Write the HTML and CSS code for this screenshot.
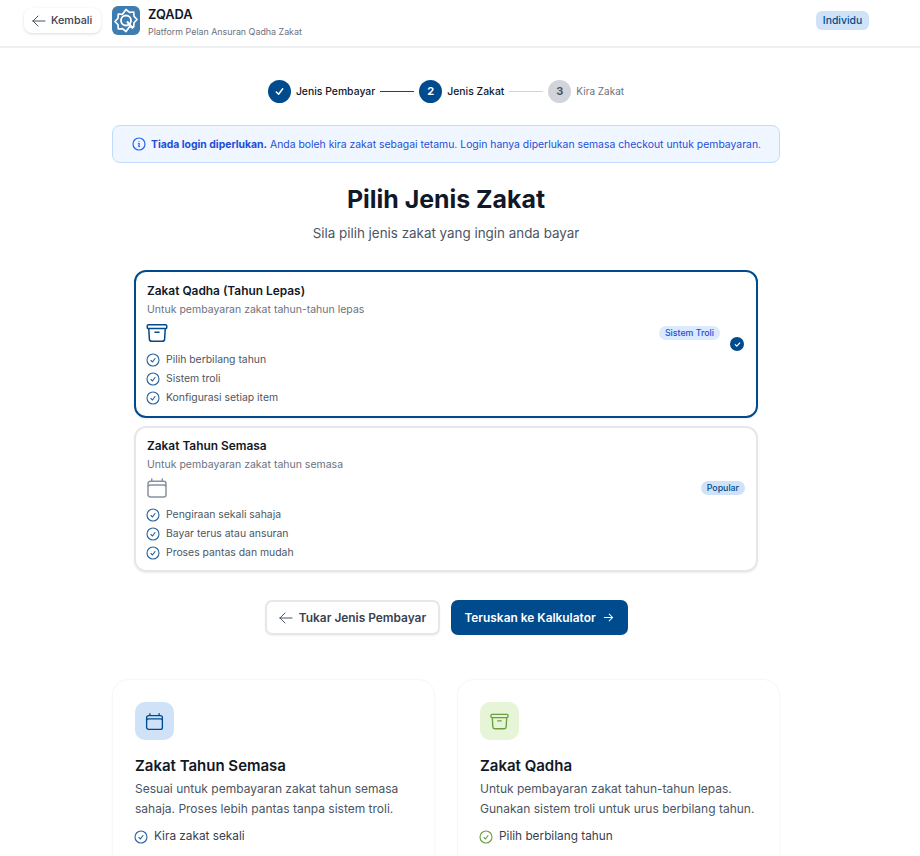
FILE: index.html
```html
<!DOCTYPE html>
<html>
<head>
    <title>ZQADA - Pilih Jenis Zakat</title>
    <link rel="stylesheet" href="styles.css">
</head>
<body>
    <svg class="sprite" width="0" height="0">
        <symbol id="i-check" viewBox="0 0 24 24"><path d="M9 12.750 11.250 15 15 9.750M21 12a9 9 0 1 1-18 0 9 9 0 0 1 18 0Z" fill="none" stroke="currentColor" stroke-width="1.700" stroke-linecap="round" stroke-linejoin="round"/></symbol>
        <symbol id="i-box" viewBox="0 0 24 24"><path d="m20.250 7.500-.625 10.632a2.250 2.250 0 0 1-2.247 2.118H6.622a2.250 2.250 0 0 1-2.247-2.118L3.750 7.500M10 11.250h4M3.375 7.500h17.250c.621 0 1.125-.504 1.125-1.125v-1.500c0-.621-.504-1.125-1.125-1.125H3.375c-.621 0-1.125.504-1.125 1.125v1.500c0 .621.504 1.125 1.125 1.125Z" fill="none" stroke="currentColor" stroke-width="1.500" stroke-linecap="round" stroke-linejoin="round"/></symbol>
        <symbol id="i-cal" viewBox="0 0 24 24"><path d="M6.750 3v2.250M17.250 3v2.250M3 18.750V7.500a2.250 2.250 0 0 1 2.250-2.250h13.500A2.250 2.250 0 0 1 21 7.500v11.250m-18 0A2.250 2.250 0 0 0 5.250 21h13.500A2.250 2.250 0 0 0 21 18.750m-18 0v-7.500A2.250 2.250 0 0 1 5.250 9h13.500A2.250 2.250 0 0 1 21 11.250v7.500" fill="none" stroke="currentColor" stroke-width="1.500" stroke-linecap="round" stroke-linejoin="round"/></symbol>
        <symbol id="i-left" viewBox="0 0 24 24"><path d="M10.500 19.500 3 12m0 0 7.500-7.500M3 12h18" fill="none" stroke="currentColor" stroke-width="1.500" stroke-linecap="round" stroke-linejoin="round"/></symbol>
        <symbol id="i-right" viewBox="0 0 24 24"><path d="M13.500 4.500 21 12m0 0-7.500 7.500M21 12H3" fill="none" stroke="currentColor" stroke-width="2.200" stroke-linecap="round" stroke-linejoin="round"/></symbol>
    </svg>

    <header class="topbar">
        <div class="topbar-left">
            <a class="back-btn"><svg class="back-icon"><use href="#i-left"/></svg>Kembali</a>
            <svg class="logo" viewBox="0 0 28 29">
                <rect width="28" height="29" rx="6" fill="#3f7cb0"/>
                <path d="M14 3.500l3.500 2.800 4.200-.3.300 4.200 3 3.300-3 3.300-.3 4.200-4.200-.3L14 25.500l-3.500-2.800-4.200.3-.3-4.200-3-3.300 3-3.300.3-4.200 4.200.3z" fill="none" stroke="#fff" stroke-width="1.700" stroke-linejoin="round"/>
                <circle cx="14" cy="14.500" r="5" fill="none" stroke="#fff" stroke-width="1.800"/>
                <path d="M15 15.500l6 7" stroke="#fff" stroke-width="2"/>
            </svg>
            <div class="brand">
                <div class="brand-name">ZQADA</div>
                <div class="brand-sub">Platform Pelan Ansuran Qadha Zakat</div>
            </div>
        </div>
        <span class="role-badge">Individu</span>
    </header>

    <main class="page">
        <div class="stepper">
            <span class="step-dot"><svg viewBox="0 0 24 24"><path d="M5 13l5 5L19 6" fill="none" stroke="#fff" stroke-width="3.200" stroke-linecap="round" stroke-linejoin="round"/></svg></span>
            <span class="step-label">Jenis Pembayar</span>
            <span class="step-line step-line-done"></span>
            <span class="step-dot">2</span>
            <span class="step-label">Jenis Zakat</span>
            <span class="step-line"></span>
            <span class="step-dot step-dot-off">3</span>
            <span class="step-label step-label-off">Kira Zakat</span>
        </div>

        <div class="notice">
            <svg class="notice-icon" viewBox="0 0 24 24"><path d="m11.250 11.250.041-.020a.750.750 0 0 1 1.063.852l-.708 2.836a.750.750 0 0 0 1.063.853l.041-.021M21 12a9 9 0 1 1-18 0 9 9 0 0 1 18 0Zm-9-3.750h.008v.008H12V8.250Z" fill="none" stroke="currentColor" stroke-width="1.800" stroke-linecap="round" stroke-linejoin="round"/></svg>
            <p><strong>Tiada login diperlukan.</strong> Anda boleh kira zakat sebagai tetamu. Login hanya diperlukan semasa checkout untuk pembayaran.</p>
        </div>

        <h1 class="page-title">Pilih Jenis Zakat</h1>
        <p class="page-sub">Sila pilih jenis zakat yang ingin anda bayar</p>

        <div class="options">
            <div class="option option-selected">
                <h3>Zakat Qadha (Tahun Lepas)</h3>
                <p class="option-desc">Untuk pembayaran zakat tahun-tahun lepas</p>
                <div class="option-row">
                    <svg class="option-icon"><use href="#i-box"/></svg>
                    <span class="pill pill-blue">Sistem Troli</span>
                    <span class="tick"><svg viewBox="0 0 24 24"><path d="M6 12.500l4 4 8-8.500" fill="none" stroke="#fff" stroke-width="3" stroke-linecap="round" stroke-linejoin="round"/></svg></span>
                </div>
                <ul class="option-list">
                    <li><svg><use href="#i-check"/></svg>Pilih berbilang tahun</li>
                    <li><svg><use href="#i-check"/></svg>Sistem troli</li>
                    <li><svg><use href="#i-check"/></svg>Konfigurasi setiap item</li>
                </ul>
            </div>

            <div class="option">
                <h3>Zakat Tahun Semasa</h3>
                <p class="option-desc">Untuk pembayaran zakat tahun semasa</p>
                <div class="option-row">
                    <svg class="option-icon option-icon-off"><use href="#i-cal"/></svg>
                    <span class="pill">Popular</span>
                </div>
                <ul class="option-list">
                    <li><svg><use href="#i-check"/></svg>Pengiraan sekali sahaja</li>
                    <li><svg><use href="#i-check"/></svg>Bayar terus atau ansuran</li>
                    <li><svg><use href="#i-check"/></svg>Proses pantas dan mudah</li>
                </ul>
            </div>
        </div>

        <div class="actions">
            <a class="btn btn-light"><svg class="btn-left"><use href="#i-left"/></svg>Tukar Jenis Pembayar</a>
            <a class="btn btn-primary">Teruskan ke Kalkulator<svg class="btn-right"><use href="#i-right"/></svg></a>
        </div>

        <div class="info-grid">
            <section class="info-card">
                <div class="info-icon info-icon-blue"><svg><use href="#i-cal"/></svg></div>
                <h2>Zakat Tahun Semasa</h2>
                <p>Sesuai untuk pembayaran zakat tahun semasa sahaja. Proses lebih pantas tanpa sistem troli.</p>
                <div class="info-item"><svg><use href="#i-check"/></svg>Kira zakat sekali</div>
            </section>
            <section class="info-card">
                <div class="info-icon info-icon-green"><svg><use href="#i-box"/></svg></div>
                <h2>Zakat Qadha</h2>
                <p>Untuk pembayaran zakat tahun-tahun lepas. Gunakan sistem troli untuk urus berbilang tahun.</p>
                <div class="info-item info-item-green"><svg><use href="#i-check"/></svg>Pilih berbilang tahun</div>
            </section>
        </div>
    </main>
</body>
</html>
```

FILE: styles.css
```css
* {
    box-sizing: border-box;
}
html, body {
    margin: 0;
    height: 856px;
    overflow: hidden;
}
body {
    background-color: #fff;
    font-family: "Inter", "Liberation Sans", sans-serif;
    color: #111827;
}
h1, h2, h3, p, ul {
    margin: 0;
    padding: 0;
}
.sprite {
    position: absolute;
}

/* top bar */
.topbar {
    height: 48px;
    border-bottom: 2px solid #eeeff1;
    padding: 6px 51px 0 24px;
    display: flex;
    justify-content: space-between;
    align-items: flex-start;
}
.topbar-left {
    display: flex;
    align-items: flex-start;
}
.back-btn {
    margin-top: 2px;
    width: 77px;
    height: 25px;
    border-radius: 8px;
    box-shadow: 0 1px 3px rgba(0, 0, 0, 0.14);
    display: flex;
    align-items: center;
    padding-left: 7px;
    font-size: 10.800px;
    font-weight: 500;
    color: #374151;
}
.back-icon {
    width: 16px;
    height: 16px;
    margin-right: 4px;
    color: #4b5563;
}
.logo {
    width: 28px;
    height: 29px;
    margin-left: 11px;
}
.brand {
    margin-left: 8px;
}
.brand-name {
    font-size: 12.800px;
    font-weight: 600;
    line-height: 18px;
}
.brand-sub {
    font-size: 8.900px;
    line-height: 12px;
    margin-top: 2px;
    color: #6b7280;
}
.role-badge {
    margin-top: 5px;
    width: 53px;
    height: 19px;
    border-radius: 6px;
    background-color: #cfe2f7;
    color: #004b8d;
    font-size: 10.400px;
    font-weight: 500;
    line-height: 19px;
    text-align: center;
}

/* page */
.page {
    width: 892px;
    padding: 0 112px;
}

.stepper {
    height: 77px;
    padding-top: 9px;
    display: flex;
    align-items: center;
    justify-content: center;
}
.step-dot {
    width: 23px;
    height: 23px;
    border-radius: 50%;
    background-color: #004b8d;
    color: #fff;
    font-size: 11px;
    font-weight: 700;
    line-height: 23px;
    text-align: center;
}
.step-dot svg {
    width: 11px;
    height: 11px;
    margin-top: 6px;
    display: block;
    margin-left: 6px;
}
.step-dot-off {
    background-color: #d1d5db;
    color: #4b5563;
}
.step-label {
    margin-left: 5px;
    font-size: 10.400px;
    font-weight: 500;
}
.step-label-off {
    color: #6b7280;
    font-size: 10px;
    font-weight: 400;
}
.step-line {
    width: 34px;
    height: 1px;
    margin: 0 5px;
    background-color: #d1d5db;
}
.step-line-done {
    background-color: #004b8d;
}

.notice {
    height: 38px;
    border: 1px solid #bfdbfe;
    border-radius: 8px;
    background-color: #eff6ff;
    color: #1d4ed8;
    display: flex;
    align-items: center;
    justify-content: center;
    font-size: 10.400px;
}
.notice-icon {
    width: 16px;
    height: 16px;
    margin-right: 4px;
    color: #2563eb;
}
.notice strong {
    font-weight: 700;
}

.page-title {
    margin-top: 20px;
    font-size: 24.900px;
    font-weight: 700;
    line-height: 32px;
    text-align: center;
}
.page-sub {
    margin-top: 8px;
    font-size: 13.400px;
    line-height: 20px;
    text-align: center;
    color: #4b5563;
}

/* options */
.options {
    margin: 27px 22px 0;
}
.option {
    height: 146px;
    margin-top: 8px;
    padding: 10px 11px 0;
    border: 2px solid #e5e7eb;
    border-radius: 12px;
    box-shadow: 0 1px 2px rgba(0, 0, 0, 0.08);
}
.option-selected {
    height: 148px;
    margin-top: 0;
    padding-top: 11px;
    border-color: #004b8d;
}
.option h3 {
    font-size: 11.900px;
    font-weight: 600;
    line-height: 16px;
}
.option-desc {
    margin-top: 3px;
    font-size: 10.500px;
    line-height: 16px;
    color: #6b7280;
}
.option-row {
    margin-top: 3px;
    height: 24px;
    display: flex;
    align-items: center;
    justify-content: flex-end;
}
.option-icon {
    width: 24px;
    height: 24px;
    margin-left: -2px;
    margin-right: auto;
    color: #004b8d;
}
.option-icon-off {
    color: #8a92a0;
}
.pill {
    height: 14px;
    padding: 0 6px;
    border-radius: 7px;
    background-color: #cfe2f7;
    color: #004b8d;
    font-size: 8.800px;
    font-weight: 500;
    line-height: 14px;
}
.pill-blue {
    background-color: #dbeafe;
    color: #1d4ed8;
}
.tick {
    width: 14px;
    height: 14px;
    margin: 22px 1px 0 10px;
    border-radius: 50%;
    background-color: #004b8d;
    display: flex;
    align-items: center;
    justify-content: center;
}
.tick svg {
    width: 9px;
    height: 9px;
}
.option-list {
    list-style: none;
    margin-top: 5px;
}
.option-list li {
    height: 19px;
    display: flex;
    align-items: center;
    font-size: 10.400px;
    color: #4b5563;
}
.option-list svg {
    width: 16px;
    height: 16px;
    margin: 0 5px 0 -2px;
    color: #2a659f;
}

/* buttons */
.actions {
    margin-top: 28px;
    display: flex;
    justify-content: center;
    gap: 11px;
}
.btn {
    height: 35px;
    border-radius: 7px;
    display: flex;
    align-items: center;
    justify-content: center;
    font-size: 11.900px;
    font-weight: 600;
}
.btn-light {
    width: 175px;
    border: 2px solid #e5e7eb;
    color: #374151;
    box-shadow: 0 1px 2px rgba(0, 0, 0, 0.06);
}
.btn-primary {
    width: 177px;
    background-color: #004b8d;
    color: #fff;
}
.btn-left {
    width: 16px;
    height: 16px;
    margin-right: 5px;
    color: #4b5563;
}
.btn-right {
    width: 11px;
    height: 11px;
    margin-left: 7px;
}

/* info cards */
.info-grid {
    margin-top: 44px;
    display: grid;
    grid-template-columns: 1fr 1fr;
    gap: 22px;
}
.info-card {
    height: 260px;
    padding: 22px 22px 0;
    border: 1px solid #f7f7f8;
    border-radius: 16px;
    box-shadow: 0 1px 3px rgba(0, 0, 0, 0.03);
}
.info-icon {
    width: 39px;
    height: 38px;
    border-radius: 10px;
    display: flex;
    align-items: center;
    justify-content: center;
}
.info-icon svg {
    width: 21px;
    height: 21px;
}
.info-icon-blue {
    background-color: #cfe2f7;
    color: #004b8d;
}
.info-icon-green {
    background-color: #e6f4d7;
    color: #6a9f3f;
}
.info-card h2 {
    margin-top: 16px;
    font-size: 15px;
    font-weight: 600;
    line-height: 20px;
}
.info-card p {
    margin-top: 3px;
    font-size: 12px;
    line-height: 19.500px;
    color: #4b5563;
}
.info-item {
    margin-top: 9px;
    display: flex;
    align-items: center;
    font-size: 11.800px;
    line-height: 19px;
    color: #374151;
}
.info-item svg {
    width: 16px;
    height: 16px;
    margin: 0 5px 0 -2px;
    color: #2a659f;
}
.info-item-green svg {
    color: #6a9f3f;
}
```
